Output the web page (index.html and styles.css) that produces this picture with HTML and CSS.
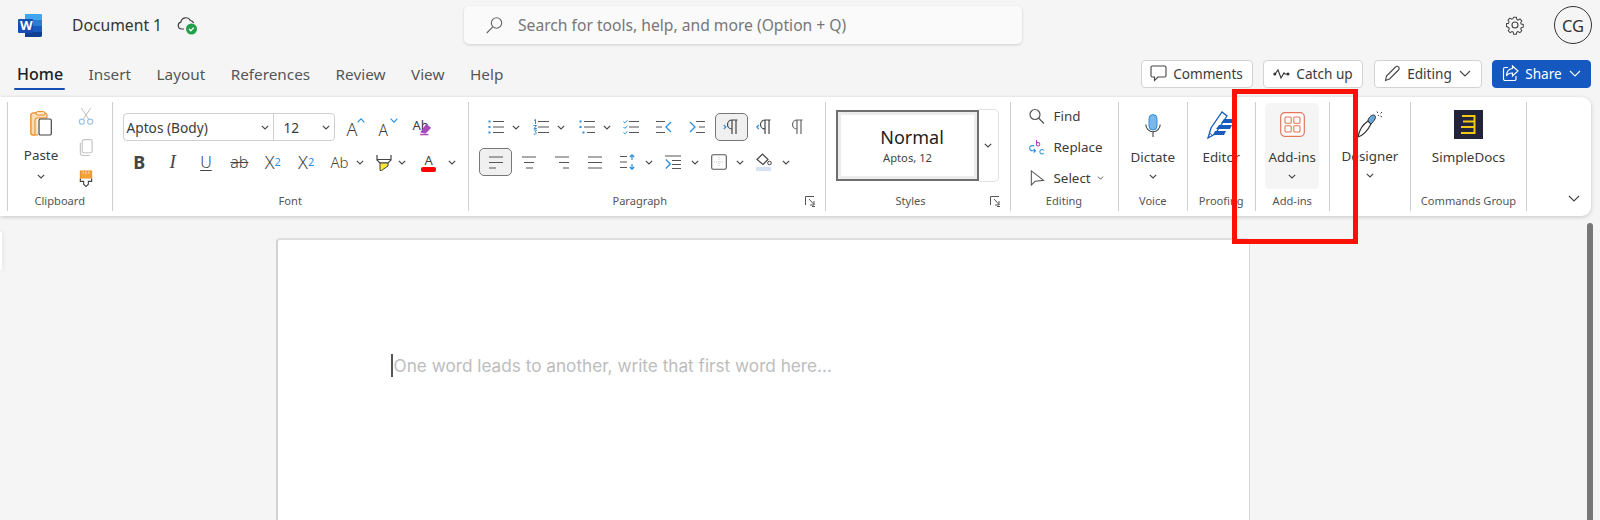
FILE: index.html
```html
<!DOCTYPE html>
<html lang="en">
<head>
<meta charset="utf-8">
<title>Document 1 - Word</title>
<link rel="stylesheet" href="styles.css">
</head>
<body>
<svg class="defs" width="0" height="0">
  <symbol id="chev" viewBox="0 0 8 5"><path d="M.8.8 4 4 7.2.8" fill="none" stroke="#444" stroke-width="1.1"/></symbol>
  <symbol id="launch" viewBox="0 0 10 11"><path d="M.5 9V.5H9M4 3l5 5.5M9 5v4H5M7 10.500h3" fill="none" stroke="#555" stroke-width="1"/></symbol>
</svg>

<header class="topbar">
  <svg class="word-logo" viewBox="0 0 24 23">
    <path d="M7 0h15a2 2 0 0 1 2 2v19a2 2 0 0 1-2 2H7z" fill="#2b7cd3"/>
    <path d="M7 0h15a2 2 0 0 1 2 2v4H7z" fill="#41a5ee"/>
    <path d="M7 12h17v6H7z" fill="#185abd"/>
    <path d="M7 18h17v3a2 2 0 0 1-2 2H7z" fill="#103f91"/>
    <rect y="5" width="15" height="14" rx="1" fill="#1450b4"/>
  </svg>
  <span class="word-w">W</span>
  <span class="doc-title">Document 1</span>
  <svg class="cloud" viewBox="0 0 21 19">
    <path d="M7 13H4.500a3.500 3.500 0 0 1-.6-6.900A5 5 0 0 1 13.300 4.500a3.700 3.700 0 0 1 3.300 2.700" fill="none" stroke="#444" stroke-width="1.200"/>
    <circle cx="14.500" cy="13" r="5.500" fill="#20a04a"/>
    <path d="m12 13 1.800 1.800 3-3.200" fill="none" stroke="#fff" stroke-width="1.300"/>
  </svg>
  <div class="search">
    <svg class="search-icon" viewBox="0 0 17 17"><circle cx="10.500" cy="6" r="5.200" fill="none" stroke="#666" stroke-width="1.100"/><path d="M6.800 9.800 .8 16" stroke="#666" stroke-width="1.100"/></svg>
    <span class="search-text">Search for tools, help, and more (Option + Q)</span>
  </div>
  <svg class="gear" viewBox="0 0 20 20">
    <path d="M8.400 1h3.200l.5 2.500 1.500.7 2.200-1.300 2.200 2.300-1.300 2.100.6 1.600 2.400.5v3.200l-2.400.6-.6 1.500 1.300 2.100-2.200 2.200-2.200-1.300-1.500.7-.5 2.400H8.400l-.5-2.400-1.500-.7-2.200 1.300-2.200-2.200 1.300-2.100-.6-1.500L0 11.600V8.400l2.400-.5.600-1.600-1.300-2.100 2.200-2.300 2.200 1.300 1.500-.7z" transform="translate(1.500 1.500) scale(.85)" fill="none" stroke="#444" stroke-width="1.200"/>
    <circle cx="10" cy="10" r="3" fill="none" stroke="#444" stroke-width="1.100"/>
  </svg>
  <div class="avatar">CG</div>
</header>

<nav class="tabbar">
  <a class="tab tab-active">Home</a>
  <a class="tab">Insert</a>
  <a class="tab">Layout</a>
  <a class="tab">References</a>
  <a class="tab">Review</a>
  <a class="tab">View</a>
  <a class="tab">Help</a>
  <div class="actions">
    <button class="act act-comments">
      <svg class="act-i" viewBox="0 0 17 17"><path d="M1 2.500A1.500 1.500 0 0 1 2.500 1h12A1.500 1.500 0 0 1 16 2.500v8a1.500 1.500 0 0 1-1.500 1.500H8l-3.500 3.500V12h-2A1.500 1.500 0 0 1 1 10.500z" fill="none" stroke="#444" stroke-width="1.100"/></svg>Comments
    </button>
    <button class="act act-catch">
      <svg class="act-i catch-i" viewBox="0 0 17 12"><path d="M2 6l3-4 3 8 3-5 1 1h3" fill="none" stroke="#333" stroke-width="1.100"/><circle cx="1.800" cy="6" r="1.500" fill="#333"/><circle cx="15" cy="6" r="1.500" fill="#333"/></svg>Catch up
    </button>
    <button class="act act-edit">
      <svg class="act-i" viewBox="0 0 17 17"><path d="m1.500 15.500 1-4.500L11.500 2a2 2 0 0 1 3 0 2 2 0 0 1 0 3L5.500 14z" fill="none" stroke="#444" stroke-width="1.100"/></svg>Editing
      <svg class="act-chev" viewBox="0 0 12 7"><path d="m1 1 5 5 5-5" fill="none" stroke="#444" stroke-width="1.100"/></svg>
    </button>
    <button class="act act-share">
      <svg class="act-i" viewBox="0 0 17 17"><path d="M6 2.500H3A1.500 1.500 0 0 0 1.500 4v10A1.500 1.500 0 0 0 3 15.500h9.500A1.500 1.500 0 0 0 14 14v-3M10.500 1l5.500 5-5.500 5V8C7.500 8 5.500 9 4.500 11c0-4 2-7 6-7.500z" fill="none" stroke="#fff" stroke-width="1.200"/></svg>Share
      <svg class="act-chev" viewBox="0 0 12 7"><path d="m1 1 5 5 5-5" fill="none" stroke="#fff" stroke-width="1.100"/></svg>
    </button>
  </div>
</nav>

<section class="ribbon">
  <div class="grp grp-clipboard">
    <div class="body body-clip">
      <div class="big big-paste">
        <svg class="big-i paste-i" viewBox="0 0 22 25">
          <path d="M7 2H3a2 2 0 0 0-2 2v18a2 2 0 0 0 2 2h5" fill="#fbe3c4" stroke="#e8891c" stroke-width="1.200"/>
          <path d="M7 2h8a2 2 0 0 1 2 2v3H7a2 2 0 0 0-2 2v15H3a2 2 0 0 1-2-2V4a2 2 0 0 1 2-2z" fill="#fbdcb8" stroke="#e8891c" stroke-width="1"/>
          <rect x="6" y=".6" width="9" height="3.400" rx="1.500" fill="#fde9d0" stroke="#e8891c"/>
          <rect x="9" y="8" width="12.300" height="16" rx="1.600" fill="#fff" stroke="#444" stroke-width="1.200"/>
        </svg>
        <span class="big-t">Paste</span>
        <svg class="chev-b"><use href="#chev"/></svg>
      </div>
      <div class="small-col">
        <svg class="s-i" viewBox="0 0 16 18"><path d="M3 0l8 12M13 0 5 12" stroke="#b9b9b9" fill="none"/><circle cx="3.600" cy="14.500" r="2.700" fill="#fff" stroke="#9cc3e6" stroke-width="1.200"/><circle cx="12.400" cy="14.500" r="2.700" fill="#fff" stroke="#9cc3e6" stroke-width="1.200"/></svg>
        <svg class="s-i" viewBox="0 0 16 18"><rect x="4" y=".6" width="10.500" height="14" rx="2" fill="#fff" stroke="#c4c4c4" stroke-width="1.200"/><path d="M2 4v10.500A3 3 0 0 0 5 17.500h7" fill="none" stroke="#c4c4c4" stroke-width="1.200"/></svg>
        <svg class="s-i" viewBox="0 0 16 18"><path d="M2 1h12v8H2z" fill="#f4a137" stroke="#e8891c"/><path d="M5 1v3M8 1v4M11 1v3" stroke="#fbdcb8"/><path d="M2 9v3h3.500v3L8 17.500l2.500-2.500v-3H14V9" fill="#fff" stroke="#444" stroke-width="1.200"/></svg>
      </div>
    </div>
    <div class="lbl">Clipboard</div>
  </div>

  <div class="grp grp-font">
    <div class="body body-rows">
      <div class="row">
        <div class="fontbox">
          <span class="fb-name">Aptos (Body)<svg class="chev-f"><use href="#chev"/></svg></span>
          <span class="fb-size">12<svg class="chev-f"><use href="#chev"/></svg></span>
        </div>
        <span class="glyph grow"><span class="gl-a">A</span><svg class="caret" viewBox="0 0 8 5"><path d="M.6 4.400 4 .8l3.400 3.600" fill="none" stroke="#2a8fdc" stroke-width="1.100"/></svg></span>
        <span class="glyph shrink"><span class="gl-a2">A</span><svg class="caret" viewBox="0 0 8 5"><path d="M.6.6 4 4.200 7.400.6" fill="none" stroke="#2a8fdc" stroke-width="1.100"/></svg></span>
        <span class="glyph clearfmt"><span class="gl-ab">Ab</span><svg class="eraser" viewBox="0 0 11 11"><path d="M6 .8 10.300 4 5.500 9 1 8z" fill="#a64bb8"/><path d="M1 9.800h7" stroke="#a64bb8" stroke-width="1.200"/></svg></span>
      </div>
      <div class="row">
        <span class="cell t-b">B</span>
        <span class="cell t-i">I</span>
        <span class="cell t-u">U</span>
        <span class="cell t-s">ab</span>
        <span class="cell t-x">X<sub>2</sub></span>
        <span class="cell t-x">X<sup>2</sup></span>
        <span class="cell t-c">Ab</span>
        <svg class="chev-r ab-chev"><use href="#chev"/></svg>
        <span class="cell cell-hi"><svg class="ic16" viewBox="0 0 16 17"><path d="M1 1v5l3 3h8l3-3V1M1 5.500h14" fill="none" stroke="#444" stroke-width="1.200"/><path d="M4 9h8v3l-6.500 4.500H4z" fill="#fbe73b" stroke="#444"/></svg></span>
        <svg class="chev-r"><use href="#chev"/></svg>
        <span class="cell cell-col"><span class="t-a">A</span><span class="redbar"></span></span>
        <svg class="chev-r chev-last"><use href="#chev"/></svg>
      </div>
    </div>
    <div class="lbl">Font</div>
  </div>

  <div class="grp grp-para">
    <div class="body body-rows">
      <div class="row row-para row-a">
        <span class="cell-p"><svg class="ic16" viewBox="0 0 16 14"><path d="M5 1.500h11M5 7h11M5 12.500h11" stroke="#555" stroke-width="1.200"/><path d="M.5 1.500h2M.5 7h2M.5 12.500h2" stroke="#2a8fdc" stroke-width="2"/></svg></span><svg class="chev-p"><use href="#chev"/></svg>
        <span class="cell-p"><svg class="ic16" viewBox="0 0 16 16"><path d="M5 2.500h11M5 8h11M5 13.500h11" stroke="#555" stroke-width="1.200"/><path d="M1 1.500 2.500.5v4.500M.5 6.500h3L1 9.500h2.800M.8 11h2.600l-1 1.700 1 1.500-1 1H.8" fill="none" stroke="#2a8fdc"/></svg></span><svg class="chev-p"><use href="#chev"/></svg>
        <span class="cell-p"><svg class="ic16" viewBox="0 0 16 14"><path d="M5 1.500h11M5 7h11M8 12.500h8" stroke="#555" stroke-width="1.200"/><path d="M.5 1.500h2M.5 7h2M3.500 12.500h2" stroke="#2a8fdc" stroke-width="2"/></svg></span><svg class="chev-p"><use href="#chev"/></svg>
        <span class="cell-p cell-list"><svg class="ic16" viewBox="0 0 16 14"><path d="M6 1.500h10M6 7h10M6 12.500h10" stroke="#555" stroke-width="1.200"/><path d="m.5 1.500 1.300 1.300L4.500.4M.5 7l1.300 1.300L4.500 5.900M.5 12.500l1.300 1.300 2.700-2.400" fill="none" stroke="#2a8fdc"/></svg></span>
        <span class="cell-p"><svg class="ic16" viewBox="0 0 16 14"><path d="M0 1.500h9M0 7h6M0 12.500h9" stroke="#555" stroke-width="1.200"/><path d="M15 2 10 7l5 5" fill="none" stroke="#2a8fdc" stroke-width="1.300"/></svg></span>
        <span class="cell-p"><svg class="ic16" viewBox="0 0 16 14"><path d="M7 1.500h9M10 7h6M7 12.500h9" stroke="#555" stroke-width="1.200"/><path d="m1 2 5 5-5 5" fill="none" stroke="#2a8fdc" stroke-width="1.300"/></svg></span>
        <span class="cell-p cell-on ltr-on"><svg class="ic16" viewBox="0 0 16 16"><path d="m.8 6 2 2-2 2" fill="none" stroke="#2a8fdc" stroke-width="1.200"/><path d="M9 1v14M13 1v14M14.500 1H9a4 4 0 0 0 0 9" fill="none" stroke="#444" stroke-width="1.200"/></svg></span>
        <span class="cell-p"><svg class="ic16" viewBox="0 0 16 16"><path d="M2.800 6l-2 2 2 2" fill="none" stroke="#2a8fdc" stroke-width="1.200"/><path d="M9 1v14M13 1v14M14.500 1H9a4 4 0 0 0 0 9" fill="none" stroke="#444" stroke-width="1.200"/></svg></span>
        <span class="cell-p"><svg class="ic16" viewBox="0 0 16 16"><path d="M8 1v14M12 1v14M13.500 1H8a4 4 0 0 0 0 9" fill="none" stroke="#666" stroke-width="1.200"/></svg></span>
      </div>
      <div class="row row-para">
        <span class="cell-p cell-on"><svg class="ic16" viewBox="0 0 16 13"><path d="M1 1h14M1 6.500h14M1 12h7" stroke="#555" stroke-width="1.200"/></svg></span>
        <span class="cell-p"><svg class="ic16" viewBox="0 0 16 13"><path d="M1 1h14M3 6.500h10M5 12h7" stroke="#555" stroke-width="1.200"/></svg></span>
        <span class="cell-p"><svg class="ic16" viewBox="0 0 16 13"><path d="M1 1h14M5 6.500h10M9 12h6" stroke="#555" stroke-width="1.200"/></svg></span>
        <span class="cell-p"><svg class="ic16" viewBox="0 0 16 13"><path d="M1 1h14M1 6.500h14M1 12h14" stroke="#555" stroke-width="1.200"/></svg></span>
        <span class="cell-p"><svg class="ic16" viewBox="0 0 16 16"><path d="M0 2.500h7M0 8h7M0 13.500h7" stroke="#555" stroke-width="1.200"/><path d="M12 6V1M9.800 3 12 .8 14.200 3M12 10v5M9.800 13l2.200 2.200 2.200-2.200" fill="none" stroke="#2a8fdc" stroke-width="1.200"/></svg></span><svg class="chev-p"><use href="#chev"/></svg>
        <span class="cell-p"><svg class="ic16" viewBox="0 0 16 14"><path d="M0 1h16M7 5.500h9M7 9.500h9M7 13.500h9" stroke="#555" stroke-width="1.200"/><path d="m.8 4.500 4.500 4.500-4.500 4.500" fill="none" stroke="#2a8fdc" stroke-width="1.300"/></svg></span><svg class="chev-p"><use href="#chev"/></svg>
        <span class="cell-p"><svg class="ic16" viewBox="0 0 16 16"><rect x=".7" y=".7" width="14.600" height="14.600" rx="1.500" fill="#fff" stroke="#555" stroke-width="1.100"/><path d="M8 3v10M3 8h10" stroke="#c8c8c8" stroke-dasharray="1 1"/></svg></span><svg class="chev-p"><use href="#chev"/></svg>
        <span class="cell-p"><svg class="ic16" viewBox="0 0 16 18"><path d="M1 6.500 6.500 1l5.500 5.500-5 5z" fill="none" stroke="#444" stroke-width="1.200"/><circle cx="13.500" cy="10" r="1.800" fill="none" stroke="#444"/><rect x="0" y="14" width="15" height="4" fill="#d5e2f2"/></svg></span><svg class="chev-p"><use href="#chev"/></svg>
      </div>
    </div>
    <div class="lbl lbl-launch">Paragraph<svg class="launcher"><use href="#launch"/></svg></div>
  </div>

  <div class="grp grp-styles">
    <div class="body body-styles">
      <div class="style-card">
        <span class="st-name">Normal</span>
        <span class="st-sub">Aptos, 12</span>
      </div>
      <div class="style-more"><svg class="chev-r"><use href="#chev"/></svg></div>
    </div>
    <div class="lbl lbl-launch">Styles<svg class="launcher"><use href="#launch"/></svg></div>
  </div>

  <div class="grp grp-editing">
    <div class="body body-edit">
      <div class="ed-row"><svg class="ed-i" viewBox="0 0 16 16"><circle cx="6" cy="6" r="5" fill="none" stroke="#555" stroke-width="1.200"/><path d="m9.500 9.500 5.500 5.500" stroke="#555" stroke-width="1.200"/></svg>Find</div>
      <div class="ed-row"><svg class="ed-i replace-i" viewBox="0 0 16 18"><path d="M7.500 7V1M7.500 4.500c1-1.500 3.500-1 3.500 1s-2.500 2.500-3.500 1" fill="none" stroke="#b146c2" stroke-width="1.100"/><path d="M5 7H3a2 2 0 0 0 0 5.500h3M4.500 10.500l2 2-2 2" fill="none" stroke="#2a8fdc" stroke-width="1.100"/><path d="M15 12c-1.500-1.500-4-.8-4 1.500s2.500 3 4 1.500" fill="none" stroke="#2a8fdc" stroke-width="1.100"/></svg>Replace</div>
      <div class="ed-row"><svg class="ed-i" viewBox="0 0 16 18"><path d="M2 1v15l4-4 9-1z" fill="none" stroke="#555" stroke-width="1.100"/></svg>Select<svg class="chev-s"><use href="#chev"/></svg></div>
    </div>
    <div class="lbl">Editing</div>
  </div>

  <div class="grp grp-voice">
    <div class="body">
      <div class="big">
        <svg class="big-i mic-i" viewBox="0 0 16 24"><rect x="4" y=".6" width="8" height="15.400" rx="4" fill="#7ab8ea" stroke="#2a8fdc"/><path d="M.8 10.500a7.200 7.200 0 0 0 14.400 0M8 18v5" fill="none" stroke="#444" stroke-width="1.100"/></svg>
        <span class="big-t">Dictate</span>
        <svg class="chev-b"><use href="#chev"/></svg>
      </div>
    </div>
    <div class="lbl">Voice</div>
  </div>

  <div class="grp grp-proof">
    <div class="body">
      <div class="big">
        <svg class="big-i editor-i" viewBox="0 0 28 28"><path d="M1 27 4 17 15 1l5 4L8 23z" fill="#fff" stroke="#185abd" stroke-width="1.300"/><path d="M2.500 22l3.500 3" stroke="#185abd"/><path d="M17 8h11l-2 4H14zM12 14h13l-2 4H9zM8 20h11l-2 4H6z" fill="#185abd"/></svg>
        <span class="big-t">Editor</span>
      </div>
    </div>
    <div class="lbl">Proofing</div>
  </div>

  <div class="grp grp-addins">
    <div class="body">
      <div class="big big-hover">
        <svg class="big-i addin-i" viewBox="0 0 25 25"><rect x=".7" y=".7" width="23.600" height="23.600" rx="4" fill="#fff" stroke="#e0775a" stroke-width="1.200"/><rect x="5" y="5" width="6.200" height="6.200" rx="1" fill="none" stroke="#e0775a" stroke-width="1.100"/><rect x="13.800" y="5" width="6.200" height="6.200" rx="1" fill="none" stroke="#e0775a" stroke-width="1.100"/><rect x="5" y="13.800" width="6.200" height="6.200" rx="1" fill="none" stroke="#e0775a" stroke-width="1.100"/><rect x="13.800" y="13.800" width="6.200" height="6.200" rx="1" fill="none" stroke="#e0775a" stroke-width="1.100"/></svg>
        <span class="big-t">Add-ins</span>
        <svg class="chev-b"><use href="#chev"/></svg>
      </div>
    </div>
    <div class="lbl">Add-ins</div>
  </div>

  <div class="grp grp-designer">
    <div class="body">
      <div class="big">
        <svg class="big-i designer-i" viewBox="0 0 26 27"><path d="M1 26c1-6 4-12 10-16l3 3c-3 6-7 11-13 13z" fill="#fff" stroke="#333" stroke-width="1.200"/><path d="M11 10c0-3 3-6 6-6 1 0 2 2 1 4s-3 4-4 5z" fill="#6aa9dc" stroke="#333"/><path d="M21 4l1 1M25 1l-1.500 1.500M25 6l-1.500-.8M20 .5l.7 1.500" stroke="#444"/></svg>
        <span class="big-t">Designer</span>
        <svg class="chev-b"><use href="#chev"/></svg>
      </div>
    </div>
    <div class="lbl">&nbsp;</div>
  </div>

  <div class="grp grp-simple">
    <div class="body">
      <div class="big">
        <svg class="big-i simple-i" viewBox="0 0 29 29"><rect width="29" height="29" fill="#23233a"/><path d="M8 6h12.500v17H7M9 11.500h11M7 17h13" fill="none" stroke="#f2c811" stroke-width="2"/></svg>
        <span class="big-t">SimpleDocs</span>
      </div>
    </div>
    <div class="lbl">Commands Group</div>
  </div>

  <svg class="collapse" viewBox="0 0 12 7"><path d="m1 1 5 5 5-5" fill="none" stroke="#444" stroke-width="1.100"/></svg>
</section>

<div class="edge-tab"></div>

<main class="canvas">
  <article class="page">
    <p class="placeholder"><span class="caret-line"></span>One word leads to another, write that first word here...</p>
  </article>
</main>

<div class="scrollbar"></div>
<div class="highlight"></div>
</body>
</html>
```

FILE: styles.css
```css
* { box-sizing: border-box; }
html, body { margin: 0; height: 520px; overflow: hidden; }
body {
  position: relative;
  background: #f5f5f5;
  color: #3b3b3b;
  font-family: "Noto Sans", "Open Sans", "Liberation Sans", sans-serif;
}
.defs { position: absolute; }
svg { display: block; flex: none; }

/* top bar */
.topbar { display: flex; align-items: center; height: 50px; position: relative; }
.word-logo { width: 24px; height: 23px; margin-left: 18px; }
.word-w {
  position: absolute; left: 20px; top: 17px; width: 12px;
  color: #fff; font-size: 13px; font-weight: 700; line-height: 17px; text-align: center;
}
.doc-title { margin-left: 30px; font-size: 15.700px; color: #333; width: 105px; }
.cloud { width: 21px; height: 19px; }
.search {
  display: flex; align-items: center;
  width: 558px; height: 38px; margin-left: 266px; padding-left: 22px;
  background: #fafafa; border-radius: 5px;
  box-shadow: 0 1px 3px rgba(0,0,0,.16);
}
.search-icon { width: 17px; height: 17px; }
.search-text { margin-left: 15px; font-size: 15.650px; color: #777; }
.gear { width: 20px; height: 20px; margin-left: 483px; }
.avatar {
  width: 38px; height: 38px; margin-left: 29px;
  border: 1px solid #333; border-radius: 50%;
  display: flex; align-items: center; justify-content: center;
  font-size: 16.500px; color: #333;
}

/* tabs */
.tabbar { display: flex; align-items: center; height: 47px; padding-left: 17px; gap: 25.500px; }
.tab { position: relative; font-size: 15.300px; color: #555; line-height: 20px; }
.tab-active { color: #222; font-size: 16px; font-weight: 500; }
.tab-active::after {
  content: ""; position: absolute; left: -3px; right: -2px; bottom: -6px; height: 2px;
  background: #1450b4; border-radius: 1px;
}
.actions { display: flex; gap: 10.500px; margin-left: auto; margin-right: 9px; }
.act {
  display: flex; align-items: center; justify-content: center;
  height: 28px; padding: 0; border: 1px solid #d3d3d3; border-radius: 4px;
  background: #fff; color: #3b3b3b;
  font: 13.600px "Noto Sans", "Open Sans", sans-serif;
}
.act-comments { width: 112px; }
.act-catch { width: 100px; }
.act-edit { width: 108px; }
.act-share { width: 99px; background: #1558c0; border-color: #1558c0; color: #fff; }
.act-i { width: 17px; height: 17px; margin-right: 6px; }
.catch-i { height: 12px; }
.act-chev { width: 12px; height: 7px; margin-left: 7px; }

/* ribbon */
.ribbon {
  display: flex; height: 119px; width: 1591px; padding: 5px 0 5px 7px;
  background: #fff; border-radius: 0 9px 9px 0;
  box-shadow: 0 1px 4px rgba(0,0,0,.2);
  position: relative;
}
.grp {
  display: flex; flex-direction: column; flex: none;
  border-right: 1px solid #cfcfcf;
}
.grp-clipboard { width: 105.500px; border-left: 1px solid #cfcfcf; }
.grp-font { width: 356.500px; }
.grp-para { width: 356.500px; }
.grp-styles { width: 185px; }
.grp-editing { width: 108px; }
.grp-voice { width: 69.500px; }
.grp-proof { width: 67.500px; }
.grp-addins { width: 74.500px; }
.grp-designer { width: 81px; }
.grp-simple { width: 116px; }

.body { height: 88px; flex: none; }
.lbl {
  position: relative; flex: 1; text-align: center;
  font-size: 11.100px; line-height: 21px; color: #555;
}
.lbl-launch { padding-right: 14px; }
.launcher { position: absolute; right: 10px; top: 6px; width: 10px; height: 11px; }

/* big buttons */
.big {
  display: flex; flex-direction: column; align-items: center;
  height: 86px; margin: 1px auto 0; padding-top: 8px;
}
.big-i { height: 28px; }
.big-t { margin-top: 8px; font-size: 13.400px; line-height: 20px; color: #3b3b3b; white-space: nowrap; }
.chev-b { width: 8px; height: 5px; margin-top: 7px; }
.paste-i { width: 22px; height: 25px; margin-bottom: 1px; }
.big-paste .chev-b { margin-top: 9px; }
.mic-i { width: 16px; height: 24px; margin-top: 3px; margin-bottom: 1px; }
.editor-i { width: 28px; }
.addin-i { width: 25px; height: 25px; margin-top: 1px; margin-bottom: 2px; }
.designer-i { width: 26px; height: 27px; }
.simple-i { width: 29px; height: 29px; margin-top: -1px; }
.big-hover { width: 54px; background: #f5f5f5; border-radius: 5px; }

/* clipboard */
.body-clip { display: flex; }
.big-paste { width: 66px; margin: 1px 0 0; }
.small-col { display: flex; flex-direction: column; gap: 14px; padding-top: 6px; margin-left: 4px; }
.s-i { width: 16px; height: 17px; }

/* rows */
.body-rows { display: flex; flex-direction: column; gap: 7px; padding: 11px 0 0 10px; }
.row { display: flex; align-items: center; height: 28px; }
.fontbox {
  display: flex; width: 212px; height: 28px;
  border: 1px solid #d0d0d0; border-radius: 4px; font-size: 13.700px; line-height: 26px;
}
.fb-name { display: flex; align-items: center; justify-content: space-between; flex: 1; padding: 1px 4px 0 3px; border-right: 1px solid #d0d0d0; }
.fb-size { display: flex; align-items: center; justify-content: space-between; width: 60px; padding: 1px 4px 0 10px; }
.chev-f { width: 8px; height: 5px; }
.glyph { position: relative; display: block; height: 28px; }
.grow { width: 18px; margin-left: 12px; }
.shrink { width: 19px; margin-left: 14px; }
.clearfmt { width: 18px; margin-left: 15px; }
.gl-a { position: absolute; left: 0; top: 5px; font-size: 18px; font-weight: 300; line-height: 22px; }
.gl-a2 { position: absolute; left: 0; top: 7px; font-size: 15.500px; font-weight: 300; line-height: 20px; }
.gl-ab { position: absolute; left: 0; top: 3px; font-size: 13px; line-height: 18px; }
.caret { position: absolute; right: 0; top: 5px; width: 8px; height: 5px; }
.eraser { position: absolute; right: -1px; top: 10px; width: 13px; height: 13px; }
.cell { display: flex; align-items: center; justify-content: center; width: 33.400px; height: 28px; font-size: 15px; color: #444; }
.t-b { font-weight: 700; font-size: 18px; }
.t-i { font-style: italic; font-size: 19px; font-family: "Liberation Serif", serif; }
.t-u { text-decoration: underline; text-underline-offset: 2px; text-decoration-thickness: 1px; font-weight: 300; font-size: 16px; }
.t-s { text-decoration: line-through; font-size: 16px; font-weight: 300; }
.t-x { font-size: 18px; font-weight: 300; }
.t-x sub, .t-x sup { font-size: 11px; font-weight: 400; color: #2a8fdc; line-height: 0; }
.t-c { font-size: 15px; font-weight: 300; }
.chev-r { width: 8px; height: 5px; margin: 0 2px; }
.ab-chev { margin-left: 0; margin-right: 3px; }
.chev-last { margin-left: 7px; }
.cell-hi { width: 25px; margin-left: 4px; }
.cell-col { flex-direction: column; width: 25px; margin-left: 8px; }
.t-a { font-size: 13px; line-height: 14px; }
.redbar { flex: none; width: 15px; height: 5px; background: #f00; border-radius: 2px; }
.ic16 { width: 16px; height: auto; }

/* paragraph */
.cell-p { display: flex; align-items: center; justify-content: center; width: 33px; height: 28px; flex: none; }
.chev-p { width: 8px; height: 5px; margin: 0 3.500px 0 1px; }
.row-a .chev-p { margin: 0 5px 0 -.500px; }
.cell-list { margin-left: -1.500px; }
.ltr-on { margin-left: 1.500px; }
.cell-on { border: 1px solid #777; border-radius: 5px; background: #f0f0f0; }

/* styles */
.body-styles { display: flex; padding: 8px 0 0 10px; }
.style-card {
  display: flex; flex-direction: column; align-items: center;
  width: 143px; height: 71px; padding: 13px 0 0 10px;
  border: 2px solid #6e6e6e; box-shadow: inset 0 0 0 3px #ececec;
}
.st-name { font-size: 18px; line-height: 24px; color: #222; }
.st-sub { font-size: 11.200px; line-height: 18px; margin-right: 9px; color: #444; }
.style-more {
  display: flex; align-items: center; justify-content: center;
  width: 20px; height: 73px; margin-top: -1px;
  border: 1px solid #e0e0e0; border-left: 0; border-radius: 0 5px 5px 0;
}

/* editing */
.body-edit { padding: 0 0 0 18px; }
.ed-row { display: flex; align-items: center; height: 31px; font-size: 13.400px; color: #3b3b3b; }
.ed-row:first-child { margin-top: -1.500px; }
.ed-i { width: 16px; height: 17px; margin-right: 9px; }
.chev-s { width: 7px; height: 4px; margin-left: 6px; }

/* collapse chevron, over the ribbon corner */
.collapse { position: absolute; right: 11px; bottom: 14px; width: 12px; height: 7px; }

/* doc canvas */
.edge-tab {
  position: absolute; left: 0; top: 232px; width: 2px; height: 38px;
  background: #fff; box-shadow: 0 0 5px rgba(0,0,0,.14);
}
.canvas { padding: 22px 0 0 276px; }
.page {
  width: 974px; height: 300px; background: #fff;
  border-top: 2px solid #dedede; border-left: 2px solid #d2d2d2; border-right: 1px solid #d8d8d8;
  border-radius: 4px 4px 0 0;
}
.placeholder {
  display: flex; align-items: center; margin: 113px 0 0 113px; height: 24px;
  font-family: Inter, "Noto Sans", sans-serif; font-size: 17.200px; color: #bdbdbd; white-space: nowrap;
}
.caret-line { width: 1.500px; height: 23px; margin-right: 1px; background: #555; }

/* overlays */
.scrollbar { position: absolute; left: 1587px; top: 223px; bottom: 0; width: 6px; background: #777; border-radius: 3px 3px 0 0; }
.highlight { position: absolute; left: 1232px; top: 89px; width: 126px; height: 155px; border: 5px solid #fb1206; }
```
